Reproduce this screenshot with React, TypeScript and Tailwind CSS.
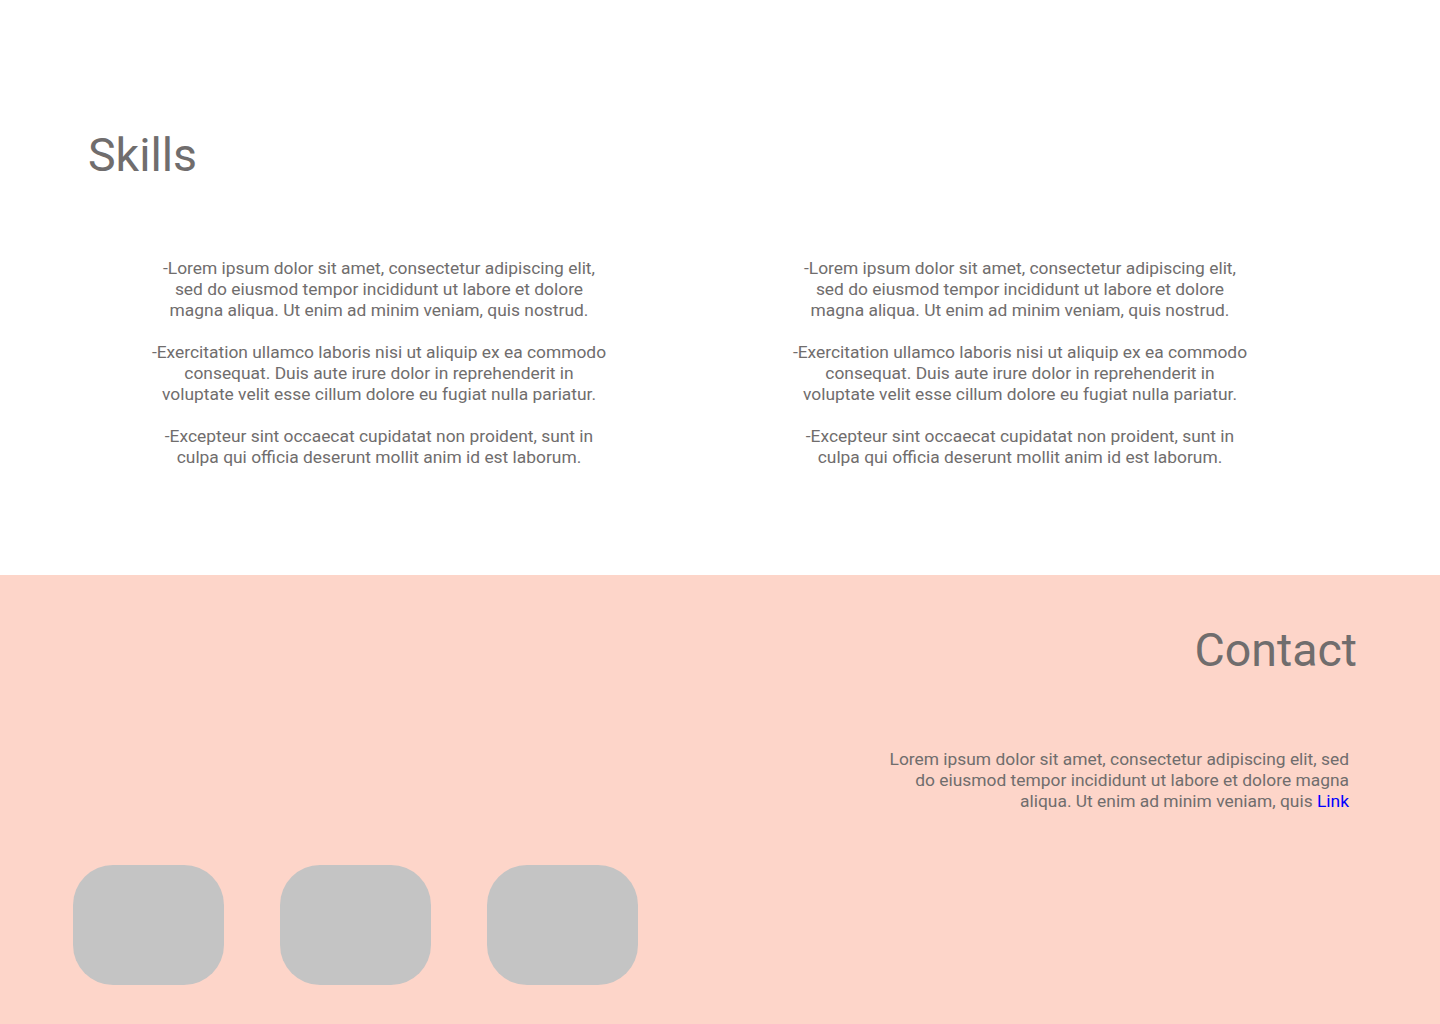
import React from "react";

const skills = [
  "-Lorem ipsum dolor sit amet, consectetur adipiscing elit, sed do eiusmod tempor incididunt ut labore et dolore magna aliqua. Ut enim ad minim veniam, quis nostrud.",
  "-Exercitation ullamco laboris nisi ut aliquip ex ea commodo consequat. Duis aute irure dolor in reprehenderit in voluptate velit esse cillum dolore eu fugiat nulla pariatur.",
  "-Excepteur sint occaecat cupidatat non proident, sunt in culpa qui officia deserunt mollit anim id est laborum.",
];

const SkillColumn: React.FC = () => (
  <div className="w-[460px] flex flex-col gap-[21px] text-center">
    {skills.map((s, i) => (
      <p key={i}>{s}</p>
    ))}
  </div>
);

const App: React.FC = () => {
  return (
    <div className="w-[1440px] min-h-[1024px] bg-white text-[#706d6d] font-['Roboto',sans-serif] text-[17.4px] leading-[21px]">
      <section className="h-[575px] pt-[128px]">
        <h1 className="pl-[88px] text-[46.5px] leading-[54px] font-normal">Skills</h1>
        <div className="flex pl-[149px] gap-[181px] mt-[76px]">
          <SkillColumn />
          <SkillColumn />
        </div>
      </section>

      <section className="h-[449px] bg-[#fdd5c9] flex flex-col">
        <div className="flex justify-end pr-[83px] pt-[48px]">
          <h2 className="text-[46.5px] leading-[54px] font-normal">Contact</h2>
        </div>
        <div className="flex justify-end pr-[91px] mt-[72px]">
          <p className="w-[462px] text-right">
            Lorem ipsum dolor sit amet, consectetur adipiscing elit, sed do
            eiusmod tempor incididunt ut labore et dolore magna aliqua. Ut enim
            ad minim veniam, quis{" "}
            <a href="#" className="text-[#0000ff]">
              Link
            </a>
          </p>
        </div>
        <div className="flex gap-[56px] pl-[73px] mt-[53px]">
          <div className="w-[151px] h-[120px] rounded-[40px] bg-[#c4c4c4]" />
          <div className="w-[151px] h-[120px] rounded-[40px] bg-[#c4c4c4]" />
          <div className="w-[151px] h-[120px] rounded-[40px] bg-[#c4c4c4]" />
        </div>
      </section>
    </div>
  );
};

export default App;
